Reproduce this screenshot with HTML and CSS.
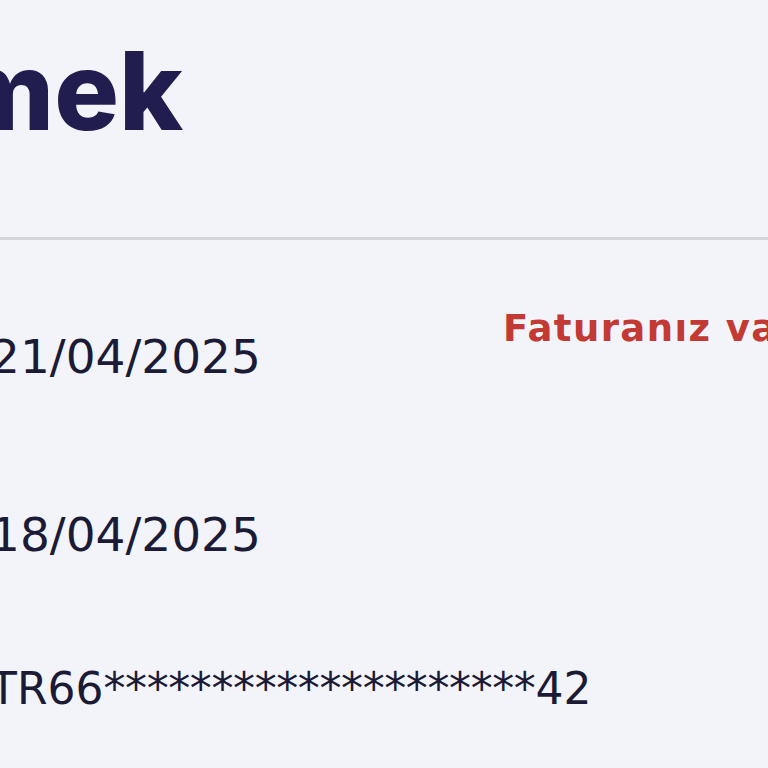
FILE: index.html
```html
<!DOCTYPE html>
<html lang="tr">
<head>
<meta charset="utf-8">
<title>Fatura</title>
<link rel="stylesheet" href="styles.css">
</head>
<body>
<div class="page">
  <h1 class="title">mek</h1>
  <div class="divider"></div>
  <section class="details">
    <div class="row-top">
      <div class="value date first">21/04/2025</div>
      <div class="alert">Faturanız vadesi geçti</div>
    </div>
    <div class="value date second">18/04/2025</div>
    <div class="value iban">TR66<span class="mask">********************</span>42</div>
  </section>
</div>
</body>
</html>
```

FILE: styles.css
```css
html, body {
  margin: 0;
  padding: 0;
}
body {
  background: #f3f3fa;
  width: 768px;
  height: 768px;
  overflow: hidden;
}
.page {
  margin-left: -10px;
  width: 1000px;
}
.title {
  margin: 0 0 0 -36px;
  padding-top: 37px;
  font-family: Inter, "Noto Sans", sans-serif;
  font-weight: 800;
  font-size: 108px;
  line-height: 1;
  color: #211d4e;
}
.divider {
  margin-top: 92px;
  height: 3px;
  background: #d4d4dd;
}
.details {
  margin-top: 70px;
  display: flex;
  flex-direction: column;
  align-items: flex-start;
}
.row-top {
  display: flex;
  align-items: flex-start;
}
.value {
  font-family: "DejaVu Sans", "Liberation Sans", sans-serif;
  color: #1c1b36;
  line-height: 1;
  white-space: nowrap;
}
.date {
  font-size: 47px;
}
.date.first {
  margin-top: 23px;
  width: 513px;
  flex: none;
}
.date.second {
  margin-top: 131px;
}
.iban {
  margin-top: 109px;
  font-size: 44px;
}
.mask {
  letter-spacing: -0.4px;
}
.alert {
  font-family: "DejaVu Sans", "Liberation Sans", sans-serif;
  font-weight: 700;
  font-size: 37px;
  line-height: 1;
  letter-spacing: 1.4px;
  color: #c23a33;
  white-space: nowrap;
}
```
